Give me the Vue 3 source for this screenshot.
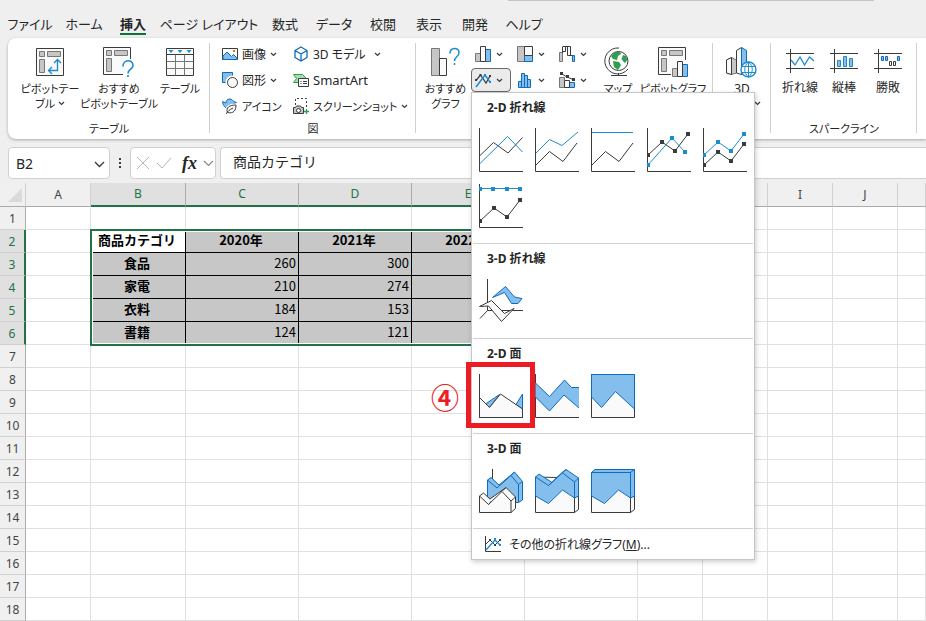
<template>
  <div class="excel">
    <div class="search-edge"></div>

    <nav class="tabs">
      <button
        v-for="tab in tabs"
        :key="tab.name"
        type="button"
        class="tab"
        :class="[tab.size, { active: tab.name === activeTab }]"
        @click="activeTab = tab.name"
      >
        <span>{{ tab.name }}</span>
      </button>
    </nav>

    <div class="ribbon">
      <!-- テーブル -->
      <section class="group">
        <div class="tools tables">
          <button type="button" class="big">
            <Icon name="pivot" />
            <span>ピボットテー<br />ブル <Icon name="chevron" /></span>
          </button>
          <button type="button" class="big">
            <Icon name="pivotHelp" />
            <span>おすすめ<br />ピボットテーブル</span>
          </button>
          <button type="button" class="big">
            <Icon name="table" />
            <span>テーブル</span>
          </button>
        </div>
        <h2>テーブル</h2>
      </section>

      <!-- 図 -->
      <section class="group">
        <div class="tools figures">
          <button v-for="f in figures" :key="f.label" type="button" class="row-button">
            <Icon :name="f.icon" />
            <span :class="f.size">{{ f.label }}</span>
            <Icon v-if="f.menu" name="chevron" />
          </button>
        </div>
        <h2>図</h2>
      </section>

      <!-- グラフ -->
      <section class="group">
        <div class="tools charts">
          <button type="button" class="big">
            <Icon name="chartHelp" />
            <span>おすすめ<br />グラフ</span>
          </button>
          <div class="chart-grid">
            <div v-for="c in chartButtons" :key="c.icon" class="chart-cell">
              <button
                type="button"
                class="chart-button"
                :class="{ pressed: c.icon === 'line' && menuOpen }"
                :aria-label="c.label"
                @click="c.icon === 'line' && (menuOpen = !menuOpen)"
              >
                <Icon :name="c.icon" />
                <Icon name="chevron" />
              </button>

              <div v-if="c.icon === 'line' && menuOpen" class="menu">
                <section v-for="s in sections" :key="s.title" class="menu-section">
                  <h3>{{ s.title }}</h3>
                  <div class="tiles">
                    <button
                      v-for="item in s.items"
                      :key="item"
                      type="button"
                      class="tile"
                      :aria-label="item"
                    >
                      <Icon :name="item" />
                      <span v-if="item === 'area1'" class="callout">
                        <span class="callout-number">④</span>
                      </span>
                    </button>
                  </div>
                </section>
                <button type="button" class="more">
                  <Icon name="lineMore" />
                  <span>その他の折れ線グラフ(<u>M</u>)...</span>
                </button>
              </div>
            </div>
          </div>
          <button type="button" class="big">
            <Icon name="globe" />
            <span>マップ</span>
          </button>
          <button type="button" class="big">
            <Icon name="pivotChart" />
            <span>ピボットグラフ</span>
          </button>
        </div>
      </section>

      <section class="group">
        <div class="tools tour">
          <button type="button" class="big">
            <Icon name="map3d" />
            <span><b>3D</b><br />マップ <Icon name="chevron" /></span>
          </button>
        </div>
      </section>

      <!-- スパークライン -->
      <section class="group">
        <div class="tools sparks">
          <button v-for="s in sparklines" :key="s.label" type="button" class="big">
            <Icon :name="s.icon" />
            <span>{{ s.label }}</span>
          </button>
        </div>
        <h2>スパークライン</h2>
      </section>
    </div>

    <div class="formula-bar">
      <div class="box name-box">
        <input v-model="cellName" type="text" aria-label="名前ボックス" />
        <button type="button" aria-label="名前の一覧"><Icon name="chevronLarge" /></button>
      </div>
      <Icon name="dots" />
      <div class="box fx-box">
        <button type="button" aria-label="キャンセル"><Icon name="cancel" /></button>
        <button type="button" aria-label="入力"><Icon name="enter" /></button>
        <button type="button" class="fx">fx</button>
        <button type="button" aria-label="関数の一覧"><Icon name="chevronGray" /></button>
      </div>
      <input v-model="formula" type="text" class="box formula" aria-label="数式バー" />
    </div>

    <div class="sheet">
      <table>
        <colgroup>
          <col class="col-head" />
          <col v-for="c in columns" :key="c.name" :class="c.size" />
        </colgroup>
        <thead>
          <tr>
            <th class="corner"><Icon name="corner" /></th>
            <th v-for="c in columns" :key="c.name" :class="{ picked: isPickedColumn(c.name) }">
              {{ c.name }}
            </th>
          </tr>
        </thead>
        <tbody>
          <tr v-for="row in 18" :key="row">
            <th :class="{ picked: isPickedRow(row) }">{{ row }}</th>
            <td
              v-for="(c, i) in columns"
              :key="c.name"
              :class="{
                data: isPickedRow(row) && isPickedColumn(c.name),
                current: row === 2 && c.name === 'B',
                label: row === 2 || c.name === 'B',
              }"
            >
              {{ cellText(row, i) }}
            </td>
          </tr>
        </tbody>
      </table>
      <div class="selection"></div>
    </div>
  </div>
</template>

<script setup>
import { h, ref } from "vue";

const DARK = "#3b3b3b";
const BLUE = "#1e8bcd";
const EDGE = "#0f6cbd";
const SKY = "#83beec";
const GRAY = "#c8c6c4";
const PALE = "#fafafa";
const GREEN = "#2f9e4f";

// [パス, 線の色, 塗りの色, 線の太さ]
const axes = ["M.5 0V43.5H44", DARK];
const marks = (points, color) => [
  points.map(([x, y]) => `M${x - 2} ${y - 2}h4v4h-4z`).join(""),
  "none",
  color,
];
const poly = (points, color) => ["M" + points.map((p) => p.join(" ")).join("L"), color];

const upper = [[1, 27], [15, 14], [28, 23], [41, 6]];
const lower = [[1, 37], [15, 24], [28, 33], [41, 16]];
const cross = [[1, 37], [25, 10], [38, 24]];
const flat = [[1, 5], [14, 5], [28, 5], [41, 5]];

const pivotBase = [
  ["M.5.5h27v27H.5z", DARK, PALE],
  ["M3.5 3.5h5v5h-5zM11.5 3.5h13v5h-13zM3.5 11.5h5v13h-5z", "#777", GRAY],
];
const sparkFrame = ["M0 4.5H28M0 19.5H28M4.5 0V24", DARK];

const icons = {
  chevron: [7, 5, [["M1 1l2.500 2.500L6 1", DARK, "none", 1.2]]],
  chevronLarge: [11, 7, [["M1 1l4.500 4.500L10 1", DARK, "none", 1.4]]],
  chevronGray: [11, 7, [["M1 1l4.500 4.500L10 1", "#888", "none", 1.2]]],
  dots: [3, 12, [["M0 1h2v2H0zM0 5h2v2H0zM0 9h2v2H0z", "none", DARK]]],
  cancel: [14, 14, [["M1 1l12 12M13 1L1 13", "#b5b5b5"]]],
  enter: [16, 14, [["M1 7l5 5L15 2", "#b5b5b5"]]],
  corner: [14, 14, [["M14 0V14H0z", "none", "#dadada"]]],

  pivot: [28, 28, [...pivotBase, ["M21.500 12v10.500h-9M18 15l3.500-3.500L25 15M16 19l-3.500 3.500L16 26", BLUE, "none", 1.4]]],
  pivotHelp: [32, 30, [
    ["M27.500 12V.5H.5v27H20", DARK, PALE],
    pivotBase[1],
    ["M20 19.500C20 12 30 12 30 18.500C30 22.500 25 22 25 26.500M25 28v2", BLUE, "none", 1.6],
  ]],
  table: [28, 28, [
    ["M.5.5h27v27H.5z", DARK, PALE],
    ["M.5 13.500h27M.5 20.500h27M9.500 6.500v21M18.500 6.500v21", "#777"],
    ["M.5 6.500h27", DARK],
    ["M2.500 2h5L5 5zM11.500 2h5L14 5zM20.500 2h5L23 5z", "none", BLUE],
  ]],
  picture: [16, 14, [
    ["M.5 1.500h15v11H.5z", DARK, "#fff"],
    ["M1 9l4-4 4.500 4.500 2-2L15 11v1.500H1z", EDGE, SKY],
    ["M11 3h2v2h-2z", "none", "#e8731a"],
  ]],
  shapes: [16, 16, [
    ["M.5.5h10v10H.5z", EDGE, SKY],
    ["M15.500 10.500a5 5 0 1 1-10 0a5 5 0 1 1 10 0z", "#fff", "#fff", 4],
    ["M15.500 10.500a5 5 0 1 1-10 0a5 5 0 1 1 10 0z", DARK, PALE],
  ]],
  leaf: [16, 16, [
    ["M.5 3.500L4 5c0-2 1-4 3.500-4S11 2.500 11.500 3.500l3 1-2.500 1C12 8.500 10 10.500 7 10.500 3 10.500 1 7.500.5 3.500z", EDGE, SKY],
    ["M5.500 14.500c-2-5 2-7.500 8.500-7.500 0 5.500-2.500 9-8.500 7.500z", "#fff", "#fff", 3],
    ["M5.500 14.500c-2-5 2-7.500 8.500-7.500 0 5.500-2.500 9-8.500 7.500zM4 16c2-3 3.500-4.500 7-6", DARK, PALE],
  ]],
  cube: [16, 16, [["M8 1l6 3.500v7L8 15l-6-3.500v-7zM2 4.500L8 8l6-3.500M8 8v7", EDGE, "none", 1.3]]],
  smartArt: [16, 14, [
    ["M.5 1.500h9l4 4H8l-3 4H.5l3-4z", GREEN, "#a5dcb1"],
    ["M5.500 5.500h10v8h-10z", DARK, PALE],
    ["M7.500 8.500h1M10 8.500h4M7.500 10.500h1M10 10.500h4", DARK],
  ]],
  camera: [16, 16, [
    ["M2.500 7V.5h11V10", DARK, "none", 1, "2 2"],
    ["M.5 9.500h2l1-1.500h4l1 1.500h2v6H.5z", DARK, GRAY],
    ["M7.500 12.500a2 2 0 1 1-4 0a2 2 0 1 1 4 0z", DARK, PALE],
    ["M13.500 11v5M11 13.500h5", GREEN, "none", 1.3],
  ]],

  chartHelp: [28, 28, [
    ["M.5.5h8v27h-8z", "#777", GRAY],
    ["M8.500 10.500h7v17h-7z", DARK, PALE],
    ["M19 5.500C19 -1 28 -1 28 4.500C28 9 23.500 8.500 23.500 13M23.500 15v2", BLUE, "none", 1.5],
  ]],
  column: [17, 16, [
    ["M.5 7.500h5v8h-5z", "#777", GRAY],
    ["M10.500 3.500h5v12h-5z", EDGE, SKY],
    ["M5.500.5h5v15h-5z", DARK, PALE],
  ]],
  treemap: [16, 16, [
    ["M.5.5h7v15h-7z", "#777", GRAY],
    ["M7.500 9.500h8v6h-8z", EDGE, SKY],
    ["M7.500.5h8v9h-8z", DARK, PALE],
  ]],
  waterfall: [17, 16, [
    ["M.5 6.500h3v9h-3z", "#777", GRAY],
    ["M3.500 7V1M3.500.5h3v5h-3M8.500.5h3v9h-3zM6 .5h3M11 9.500h3", DARK, PALE],
    ["M13.500 9.500h2v6h-2z", EDGE, SKY],
  ]],
  line: [17, 16, [
    ["M1 8.500L5.500 3l5.500 8 4-7", DARK, "none", 1.2],
    ["M1 15L10 3l5 7", BLUE, "none", 1.5],
    ["M0 7h2v2H0zM4.500 2h2v2h-2zM14 3h2v2h-2z", "none", DARK],
    ["M9 2h2v2H9zM14 9h2v2h-2z", "none", BLUE],
  ]],
  histogram: [16, 16, [["M1.500 9.500h3v6h-3zM4.500 1.500h3v14h-3zM7.500 3.500h3v12h-3zM10.500 7.500h3v8h-3z", EDGE, SKY]]],
  combo: [17, 16, [
    ["M.5 5.500h5v10h-5z", "#777", GRAY],
    ["M10.500 10.500h5v5h-5z", EDGE, SKY],
    ["M5.500 8.500h5v7h-5z", DARK, PALE],
    ["M2 1.500L8 5l6 2.500", DARK],
    ["M1 0h3v3H1zM7 3h3v3H7zM13 6h3v3h-3z", "none", DARK],
  ]],
  globe: [26, 30, [
    ["M23 14a9.500 9.500 0 1 1-19 0a9.500 9.500 0 1 1 19 0z", DARK, PALE],
    ["M10 5l5 0 1 2-3 2-1 4-4-1-2-3zM18 8l3 1 1.500 4-3 3-3-4zM8 14l6 1 2 3-3 5-4-3z", "none", GREEN],
    ["M14 1A13 13 0 1 0 23 22M13.500 26v3M6 28.500h16", DARK],
  ]],
  pivotChart: [31, 30, [
    ["M27.500 13V.5H.5v27H13", DARK, PALE],
    pivotBase[1],
    ["M14.500 21.500h5v8h-5z", "#777", GRAY],
    ["M24.500 17.500h5v12h-5z", EDGE, SKY],
    ["M19.500 14.500h5v15h-5z", DARK, PALE],
  ]],
  map3d: [32, 30, [
    ["M.5 13l5-2.500 5 2.500v13l-5 1.500L.5 26z", "#777", GRAY],
    ["M.5 13l5-2.500v17L.5 26z", DARK, PALE],
    ["M10.500 3.500L15.500.5v27l-5-1.500z", DARK, PALE],
    ["M15.500.5l5 3v24h-5z", EDGE, SKY],
    ["M30 22.500a7.500 7.500 0 1 1-15 0a7.500 7.500 0 1 1 15 0z", BLUE, "#fff", 1.4],
    ["M15 19.500h15M15 25.500h15M22.500 15v15M22.500 15c-5 4-5 11 0 15c5-4 5-11 0-15", BLUE],
  ]],
  sparkLine: [28, 24, [sparkFrame, ["M5 11l4 5 5-8 4.500 8 5-8 4.500 4", BLUE, "none", 1.3]]],
  sparkColumn: [28, 24, [sparkFrame, ["M7.500 11.500h3v6h-3zM13.500 7.500h3v10h-3zM19.500 9.500h3v8h-3z", BLUE, SKY]]],
  sparkWin: [28, 24, [
    sparkFrame,
    ["M7.500 7.500h2v4h-2zM11.500 7.500h2v4h-2zM23.500 7.500h2v4h-2z", EDGE, SKY],
    ["M15.500 12.500h2v4h-2zM19.500 12.500h2v4h-2z", DARK, PALE],
  ]],

  line1: [44, 44, [axes, ["M.5 28L14.500 14.500 29 25 43.500 9.500", DARK], ["M.5 36L28.500 8.500 43.500 24", BLUE]]],
  line2: [44, 44, [axes, ["M1 25L14.500 11.500 27 17.500 43 4", BLUE], ["M1 37L14.500 23.500 28 33.500 42 15", DARK]]],
  line3: [44, 44, [axes, ["M1 4.500H42", BLUE], ["M1 37L14.500 23.500 28 33.500 42 15", DARK]]],
  line4: [44, 44, [axes, poly(upper, DARK), poly(cross, BLUE), marks(upper, DARK), marks(cross, BLUE)]],
  line5: [44, 44, [axes, poly(upper, BLUE), poly(lower, DARK), marks(upper, BLUE), marks(lower, DARK)]],
  line6: [44, 44, [axes, ["M1 4.500H41", BLUE], poly(lower, DARK), marks(flat, BLUE), marks(lower, DARK)]],
  line3d: [44, 44, [
    ["M8.500 0V31.500H44M8.500 31.500L1 39.500", DARK],
    ["M13.500 18.500L26.500 7.500 35.500 18 43 19.500 39 24.500H32.500L25.500 13.500z", EDGE, SKY],
    ["M.5 27.500L12.500 21.500 25.500 34.500 35 29.500 22.500 42.500 9.500 27z", DARK, PALE],
  ]],
  area1: [44, 44, [
    ["M6.500 30L20.500 20.500 10.500 33.500zM43.500 20v15L37 30.500z", EDGE, SKY],
    ["M.5 23.500L10.500 33.500 21.500 20 43.500 35V43.500H.5z", DARK, PALE],
    axes,
  ]],
  area2: [44, 44, [
    ["M.5 23L14.500 37 29 21 44 34V43H.5z", "none", PALE],
    axes,
    ["M.5 9L14.500 22.500 29.500 6 36.500 13.500H44V34L29 21 14.500 37 .5 23z", "none", SKY],
    ["M.5 9L14.500 22.500 29.500 6 36.500 13.500H44M44 34L29 21 14.500 37 .5 23", EDGE],
  ]],
  area3: [44, 44, [
    ["M.5 .5H43.500V43.500H.5z", DARK, PALE],
    ["M.5 .5H43.500V35L24.500 17.500 10.500 33.500.5 23z", EDGE, SKY],
  ]],
  area3d1: [44, 44, [
    ["M13.500 0V10", DARK],
    ["M8.500 11L12 8.500 20 16 35.500 3 43.500 12.500V31L39.500 33.500H8.500z", EDGE, SKY],
    ["M8.500 11L18 19 32 6.500 39.500 15.500V33.500M32 6.500L35.500 3M39.500 15.500l4-3", EDGE],
    ["M.5 27L4.500 24 11 30 27 18.500 36.500 28V39.500L32 43.500H.5z", DARK, PALE],
    ["M.5 27L9.500 35.500 23 22.500 32 32V43.500M9.500 35.500l3-3.500M23 22.500l4-4M32 32l4.500-4", DARK],
  ]],
  area3d2: [44, 44, [
    ["M.5 8V43.500H39.500L43.500 40.500V9z", DARK, PALE],
    ["M39.500 29V43.500", DARK],
    ["M.5 8L4 5 17 13.500 31 .5 43.500 9V27L39.500 29 27.500 21 13.500 34.500.5 27z", EDGE, SKY],
    ["M.5 8L13.500 16.500 27 3.500 39.500 13V29M13.500 16.500l3.500-3M27 3.500l4-3M39.500 13l4-4", EDGE],
  ]],
  area3d3: [44, 44, [
    ["M.5 3.500V43.500H39.500L43.500 40.500V3z", DARK, PALE],
    ["M39.500 29V43.500", DARK],
    ["M.5 3.500L4 .5H43.500V27L39.500 29 27.500 21 13.500 34.500.5 27z", EDGE, SKY],
    ["M.5 3.500H39.500V29M39.500 3.500l4-3", EDGE],
  ]],
  lineMore: [16, 16, [
    ["M.5 0V15.500H16", DARK],
    ["M1 8L5 4l5 5 5-5", DARK],
    ["M1 14L10 4l5 5", BLUE, "none", 1.4],
    ["M4 3h2v2H4zM14 3h2v2h-2zM9 8h2v2H9z", "none", DARK],
    ["M9 2h2v2H9zM14 8h2v2h-2z", "none", BLUE],
  ]],
};

const Icon = ({ name }) => {
  const [width, height, parts] = icons[name];
  return h(
    "svg",
    { width, height, viewBox: `0 0 ${width} ${height}`, "aria-hidden": "true" },
    parts.map(([d, stroke, fill = "none", weight = 1, dash]) =>
      h("path", { d, stroke, fill, "stroke-width": weight, "stroke-dasharray": dash })
    )
  );
};
Icon.props = ["name"];

const activeTab = ref("挿入");
const menuOpen = ref(true);
const cellName = ref("B2");
const formula = ref("商品カテゴリ");

const tabs = [
  { name: "ファイル", size: "w56" },
  { name: "ホーム", size: "w52" },
  { name: "挿入", size: "w46" },
  { name: "ページ レイアウト", size: "w106" },
  { name: "数式", size: "w46" },
  { name: "データ", size: "w52" },
  { name: "校閲", size: "w46" },
  { name: "表示", size: "w46" },
  { name: "開発", size: "w46" },
  { name: "ヘルプ", size: "w52" },
];

const figures = [
  { icon: "picture", label: "画像", menu: true },
  { icon: "cube", label: "3D モデル", menu: true, size: "wide" },
  { icon: "shapes", label: "図形", menu: true },
  { icon: "smartArt", label: "SmartArt", size: "latin" },
  { icon: "leaf", label: "アイコン", size: "kana" },
  { icon: "camera", label: "スクリーンショット", menu: true, size: "kana" },
];

const chartButtons = [
  { icon: "column", label: "縦棒グラフ" },
  { icon: "treemap", label: "階層構造グラフ" },
  { icon: "waterfall", label: "ウォーターフォール図" },
  { icon: "line", label: "折れ線グラフ" },
  { icon: "histogram", label: "統計グラフ" },
  { icon: "combo", label: "複合グラフ" },
];

const sparklines = [
  { icon: "sparkLine", label: "折れ線" },
  { icon: "sparkColumn", label: "縦棒" },
  { icon: "sparkWin", label: "勝敗" },
];

const sections = [
  { title: "2-D 折れ線", items: ["line1", "line2", "line3", "line4", "line5", "line6"] },
  { title: "3-D 折れ線", items: ["line3d"] },
  { title: "2-D 面", items: ["area1", "area2", "area3"] },
  { title: "3-D 面", items: ["area3d1", "area3d2", "area3d3"] },
];

const columns = [
  { name: "A", size: "col-narrow" },
  { name: "B", size: "col-label" },
  { name: "C", size: "col-wide" },
  { name: "D", size: "col-wide" },
  { name: "E", size: "col-wide" },
  { name: "F", size: "col-wide" },
  { name: "G", size: "col-narrow" },
  { name: "H", size: "col-narrow" },
  { name: "I", size: "col-narrow" },
  { name: "J", size: "col-narrow" },
  { name: "", size: "col-rest" },
];

const sales = [
  ["商品カテゴリ", "2020年", "2021年", "2022年"],
  ["食品", 260, 300],
  ["家電", 210, 274],
  ["衣料", 184, 153],
  ["書籍", 124, 121],
];

const isPickedRow = (row) => row >= 2 && row <= 6;
const isPickedColumn = (name) => name !== "" && "BCDE".includes(name);
const cellText = (row, i) => sales[row - 2]?.[i - 1] ?? "";
</script>

<style>
body {
  margin: 0;
}
</style>

<style scoped>
.excel {
  height: 100vh;
  overflow: hidden;
  position: relative;
  background: #efefef;
  color: #262626;
  font-family: "Noto Sans", "Noto Sans CJK JP", sans-serif;
  font-size: 12px;
  font-feature-settings: "palt";
}

.excel * {
  box-sizing: border-box;
}

button,
input {
  font: inherit;
  font-feature-settings: inherit;
  color: inherit;
  background: none;
  border: 0;
  padding: 0;
  margin: 0;
}

h2,
h3 {
  margin: 0;
  font-size: 12px;
}

svg {
  flex: none;
}

.search-edge {
  position: absolute;
  top: 0;
  left: 508px;
  width: 366px;
  height: 1px;
  background: #c4c4c4;
}

/* タブ */
.tabs {
  display: flex;
  height: 38px;
  padding: 12px 0 0 2px;
}

.tab {
  flex: none;
  height: 24px;
  font-size: 13px;
  line-height: 24px;
  white-space: nowrap;
  display: flex;
  justify-content: center;
}

.tab span {
  height: 23px;
}

.tab.active span {
  font-weight: 700;
  border-bottom: 2px solid #0f703b;
}

.w46 {
  width: 46px;
}

.w52 {
  width: 52px;
}

.w56 {
  width: 56px;
}

.w106 {
  width: 106px;
}

/* リボン */
.ribbon {
  display: grid;
  grid-template-columns: 202px 206px 297px 58px 146px 1fr;
  height: 101px;
  margin-left: 8px;
  background: #fff;
  border-radius: 8px 0 0 8px;
  box-shadow: 0 1px 3px rgba(0, 0, 0, 0.3);
}

.group {
  position: relative;
  display: flex;
  flex-direction: column;
  justify-content: space-between;
}

.group::after {
  content: "";
  position: absolute;
  right: 0;
  top: 5px;
  bottom: 6px;
  width: 1px;
  background: #d0d0d0;
}

.group h2 {
  font-size: 11px;
  font-weight: 400;
  line-height: 16px;
  padding-bottom: 2px;
  text-align: center;
}

.tools {
  display: flex;
}

.big {
  display: flex;
  flex-direction: column;
  align-items: center;
  padding-top: 9px;
  font-size: 11px;
  line-height: 15px;
  white-space: nowrap;
}

.big b {
  font-size: 12px;
  font-weight: 400;
}

.big > svg {
  height: 30px;
  margin-bottom: 4px;
  overflow: visible;
}

.big span svg {
  vertical-align: 2px;
}

.tables {
  display: grid;
  grid-template-columns: 60px 78px 44px;
  padding-left: 12px;
}

.figures {
  display: grid;
  grid-template-columns: 71px 1fr;
  padding: 3px 0 0 12px;
}

.row-button {
  display: flex;
  align-items: center;
  gap: 4px;
  height: 26px;
  white-space: nowrap;
}

.row-button .wide {
  width: 57px;
  text-align: left;
}

.row-button .latin {
  font-size: 13px;
}

.row-button .kana {
  font-size: 11px;
}

.charts {
  display: grid;
  grid-template-columns: 51px auto 46px 64px;
  justify-content: start;
  padding-left: 4px;
}

.charts .big,
.tables .big {
  justify-self: center;
}

.chart-grid {
  display: grid;
  grid-template-columns: repeat(3, 40px);
  gap: 2px;
  align-content: start;
  padding: 4px 0 0 0;
}

.chart-cell {
  position: relative;
}

.chart-button {
  display: flex;
  align-items: center;
  justify-content: space-between;
  width: 40px;
  height: 24px;
  padding: 0 7px 0 3px;
  border: 1px solid transparent;
  border-radius: 4px;
}

.chart-button.pressed {
  background: #ebebeb;
  border-color: #6a6a6a;
}

.tour {
  justify-content: center;
}

.sparks {
  display: grid;
  grid-template-columns: repeat(3, 44px);
  padding-left: 7px;
}

.sparks .big {
  font-size: 12px;
}

.sparks .big > svg {
  height: 28px;
  margin-bottom: 5px;
}

/* グラフの種類メニュー */
.menu {
  position: absolute;
  top: 24px;
  left: 0;
  z-index: 10;
  width: 284px;
  padding: 0 1px;
  background: #fff;
  border: 1px solid #c6c6c6;
  box-shadow: 1px 2px 5px rgba(0, 0, 0, 0.2);
}

.menu-section {
  padding-bottom: 9px;
  border-bottom: 1px solid #d0d0d0;
}

.menu-section h3 {
  padding-left: 14px;
  line-height: 29px;
  font-weight: 700;
}

.tiles {
  display: flex;
  flex-wrap: wrap;
}

.tile {
  position: relative;
  width: 56px;
  height: 56px;
  padding: 6px;
}

.tile svg {
  display: block;
}

.callout {
  position: absolute;
  inset: -6px -6px -4px -7px;
  z-index: 1;
  border: 5px solid #ed1c24;
}

.callout-number {
  position: absolute;
  right: 71px;
  top: 12px;
  color: #ed1c24;
  font-size: 28px;
  line-height: 36px;
  font-weight: 700;
  font-family: "Noto Sans CJK JP", sans-serif;
}

.more {
  display: flex;
  align-items: center;
  gap: 8px;
  width: 100%;
  height: 30px;
  padding-left: 12px;
}

/* 数式バー */
.formula-bar {
  display: flex;
  align-items: center;
  height: 44px;
  padding: 8px 0 4px 8px;
}

.box {
  height: 32px;
  background: #fff;
  border: 1px solid #d0d0d0;
  border-radius: 4px;
}

.name-box {
  display: flex;
  align-items: center;
  justify-content: space-between;
  width: 102px;
  margin-right: 9px;
  padding: 0 4px 0 7px;
}

.name-box input {
  width: 60px;
  font-size: 14px;
}

.fx-box {
  display: flex;
  align-items: center;
  justify-content: space-between;
  width: 86px;
  margin: 0 4px 0 8px;
  padding: 0 1px 0 5px;
}

.fx-box button {
  display: flex;
}

.fx-box .fx {
  padding-left: 4px;
  font-family: "Liberation Serif", serif;
  font-size: 18px;
  font-style: italic;
  font-weight: 700;
}

.formula {
  flex: 1;
  min-width: 0;
  padding: 0 0 4px 12px;
  border-right: 0;
  border-radius: 4px 0 0 4px;
  font-family: "Noto Sans CJK JP", sans-serif;
  font-size: 14px;
  font-feature-settings: normal;
}

/* シート */
.sheet {
  position: relative;
}

table {
  width: 100%;
  table-layout: fixed;
  border-collapse: separate;
  border-spacing: 0;
  background: #fff;
}

.col-head {
  width: 26px;
}

.col-narrow {
  width: 65px;
}

.col-label {
  width: 95px;
}

.col-wide {
  width: 113px;
}

th,
td {
  height: 23px;
  padding: 0;
  line-height: 20px;
  overflow: hidden;
  white-space: nowrap;
  border-right: 1px solid #e0e0e0;
  border-bottom: 1px solid #e0e0e0;
}

th {
  background: #f0f0f0;
  color: #444;
  font-weight: 400;
}

thead th {
  height: 24px;
  border-right-color: #d0d0d0;
  border-bottom-color: #ababab;
}

thead th.picked {
  background: #e0e0e0;
  color: #217346;
  border-right-color: #ababab;
  border-bottom: 2px solid #217346;
}

tbody th {
  padding-top: 2px;
  border-right-color: #ababab;
  border-bottom-color: #d0d0d0;
}

tbody th.picked {
  background: #e0e0e0;
  color: #217346;
  border-right: 2px solid #217346;
}

.corner svg {
  display: block;
  margin: 0 3px 0 auto;
}

td {
  padding-bottom: 2px;
  font-family: "Noto Sans CJK JP", sans-serif;
  font-size: 13px;
  font-feature-settings: normal;
  color: #000;
}

td.data {
  background: #c7c7c7;
  border-color: #000;
  text-align: right;
  padding-right: 2px;
}

td.label {
  font-weight: 700;
  text-align: center;
}

td.current {
  background: #fff;
}

.selection {
  position: absolute;
  top: 46px;
  left: 90px;
  width: 436px;
  height: 117px;
  border: 2px solid #217346;
  box-shadow: inset 0 0 0 1px #fff;
  pointer-events: none;
}
</style>
